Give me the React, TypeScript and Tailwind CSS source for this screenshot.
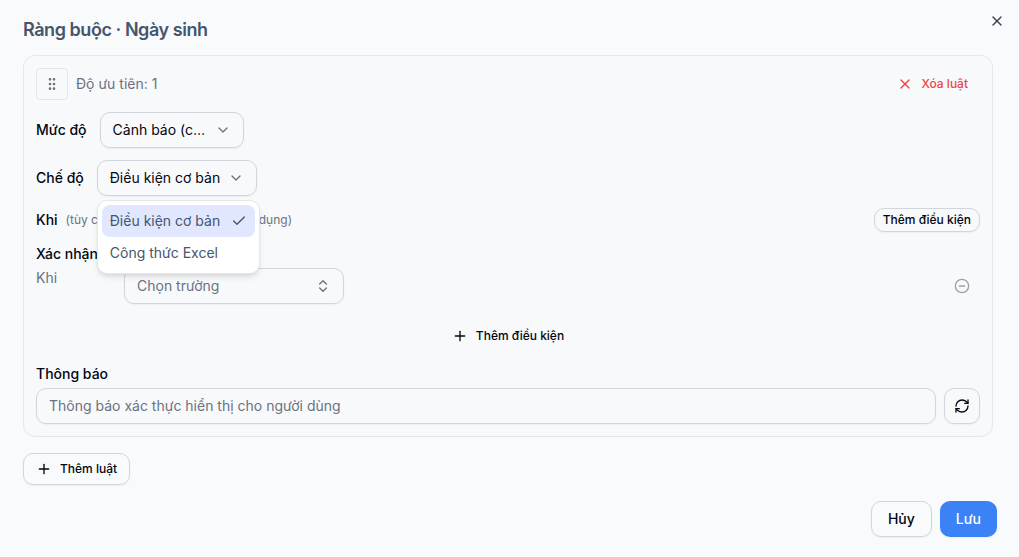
import type { ReactNode } from "react";
import { Check, ChevronDown, ChevronsUpDown, CircleMinus, GripVertical, Plus, RefreshCw, X } from "lucide-react";

const modes = ["Điều kiện cơ bản", "Công thức Excel"];

interface SelectBoxProps {
  id: string;
  className: string;
  icon: ReactNode;
  options: string[];
}

function SelectBox({ id, className, icon, options }: SelectBoxProps) {
  return (
    <div className={`relative ${className}`}>
      <select
        id={id}
        className="h-9 w-full appearance-none truncate rounded-[10px] border border-gray-300 bg-transparent pl-3 pr-8 text-sm shadow-xs outline-none"
      >
        {options.map((option) => (
          <option key={option}>{option}</option>
        ))}
      </select>
      <span className="pointer-events-none absolute inset-y-0 right-[13px] flex items-center text-gray-500">{icon}</span>
    </div>
  );
}

function ModeMenu() {
  return (
    <ul
      role="listbox"
      aria-label="Chế độ"
      className="absolute left-0 top-full z-10 mt-1 w-[163px] rounded-[10px] border border-gray-200 bg-white p-1 text-sm text-slate-600 shadow-md"
    >
      {modes.map((mode, i) => (
        <li
          key={mode}
          role="option"
          aria-selected={i === 0}
          className="flex h-8 items-center justify-between rounded-lg px-2 aria-selected:bg-indigo-100"
        >
          {mode}
          {i === 0 && <Check className="size-4" />}
        </li>
      ))}
    </ul>
  );
}

function RuleCard() {
  return (
    <section className="flex flex-col gap-3 rounded-xl border border-gray-200 bg-[#f8f9fb] p-3">
      <div className="flex items-center gap-2">
        <button aria-label="Kéo để sắp xếp" className="flex size-8 items-center justify-center rounded-sm border border-gray-200 text-gray-500">
          <GripVertical className="size-4" />
        </button>
        <span className="text-sm text-gray-500">Độ ưu tiên: 1</span>
        <button className="ml-auto flex h-8 items-center gap-2 px-3 text-xs font-medium text-[#ef4444]">
          <X className="size-4" />
          Xóa luật
        </button>
      </div>

      <div className="flex items-center gap-[13px]">
        <label htmlFor="level" className="text-sm font-medium">Mức độ</label>
        <SelectBox
          id="level"
          className="w-36"
          icon={<ChevronDown className="size-4" />}
          options={["Cảnh báo (cho phép lưu)", "Lỗi (chặn lưu)"]}
        />
      </div>

      <div className="flex items-center gap-[13px]">
        <label htmlFor="mode" className="text-sm font-medium">Chế độ</label>
        <div className="relative">
          <SelectBox id="mode" className="w-40" icon={<ChevronDown className="size-4" />} options={modes} />
          <ModeMenu />
        </div>
      </div>

      <div className="flex items-center gap-2">
        <span className="text-sm font-medium">Khi</span>
        <span className="text-xs text-gray-500">(tùy chọn — để trống nếu luôn áp dụng)</span>
        <button className="ml-auto h-6 rounded-[10px] border border-gray-300 px-2 text-xs font-medium shadow-xs">
          Thêm điều kiện
        </button>
      </div>

      <div className="flex flex-col">
        <h3 className="mb-1 text-sm font-medium">Xác nhận</h3>
        <div className="flex items-start">
          <label htmlFor="field" className="w-22 text-sm text-gray-500">Khi</label>
          <SelectBox
            id="field"
            className="w-55 text-gray-500"
            icon={<ChevronsUpDown className="size-4" />}
            options={["Chọn trường"]}
          />
          <button aria-label="Xóa điều kiện" className="ml-auto flex size-9 items-center justify-center text-gray-400">
            <CircleMinus className="size-4" />
          </button>
        </div>
        <button className="mt-4 flex h-8 items-center gap-2 self-center px-3 text-xs font-medium">
          <Plus className="size-4" />
          Thêm điều kiện
        </button>
      </div>

      <div className="flex flex-col gap-1">
        <label htmlFor="message" className="text-sm font-medium">Thông báo</label>
        <div className="flex gap-2">
          <input
            id="message"
            type="text"
            placeholder="Thông báo xác thực hiển thị cho người dùng"
            className="h-9 min-w-0 flex-1 rounded-[10px] border border-gray-300 px-3 pb-0.5 text-sm shadow-xs outline-none placeholder:text-gray-500"
          />
          <button aria-label="Tạo lại" className="flex size-9 items-center justify-center rounded-[10px] border border-gray-300 shadow-xs">
            <RefreshCw className="size-4" />
          </button>
        </div>
      </div>
    </section>
  );
}

export default function App() {
  return (
    <div role="dialog" aria-labelledby="title" className="relative flex min-h-screen flex-col gap-4 bg-[#f9fafc] pb-5 pl-[23px] pr-[22px] pt-[21px] font-['Inter',sans-serif] text-gray-950">
      <h2 id="title" className="text-lg leading-[18px] font-semibold tracking-tight text-slate-600">Ràng buộc · Ngày sinh</h2>
      <button aria-label="Đóng" className="absolute right-3.5 top-[13px] text-gray-700">
        <X className="size-4" />
      </button>

      <div className="flex flex-col gap-4 pr-1">
        <RuleCard />
        <button className="flex h-8 items-center gap-2 self-start rounded-[10px] border border-gray-300 px-3 text-xs font-medium shadow-xs">
          <Plus className="size-4" />
          Thêm luật
        </button>
      </div>

      <div className="flex justify-end gap-2 text-sm font-medium">
        <button className="h-9 rounded-[10px] border border-gray-300 px-4 shadow-xs">Hủy</button>
        <button className="h-9 rounded-[10px] bg-[#3b82f6] px-4 text-white shadow-xs">Lưu</button>
      </div>
    </div>
  );
}
